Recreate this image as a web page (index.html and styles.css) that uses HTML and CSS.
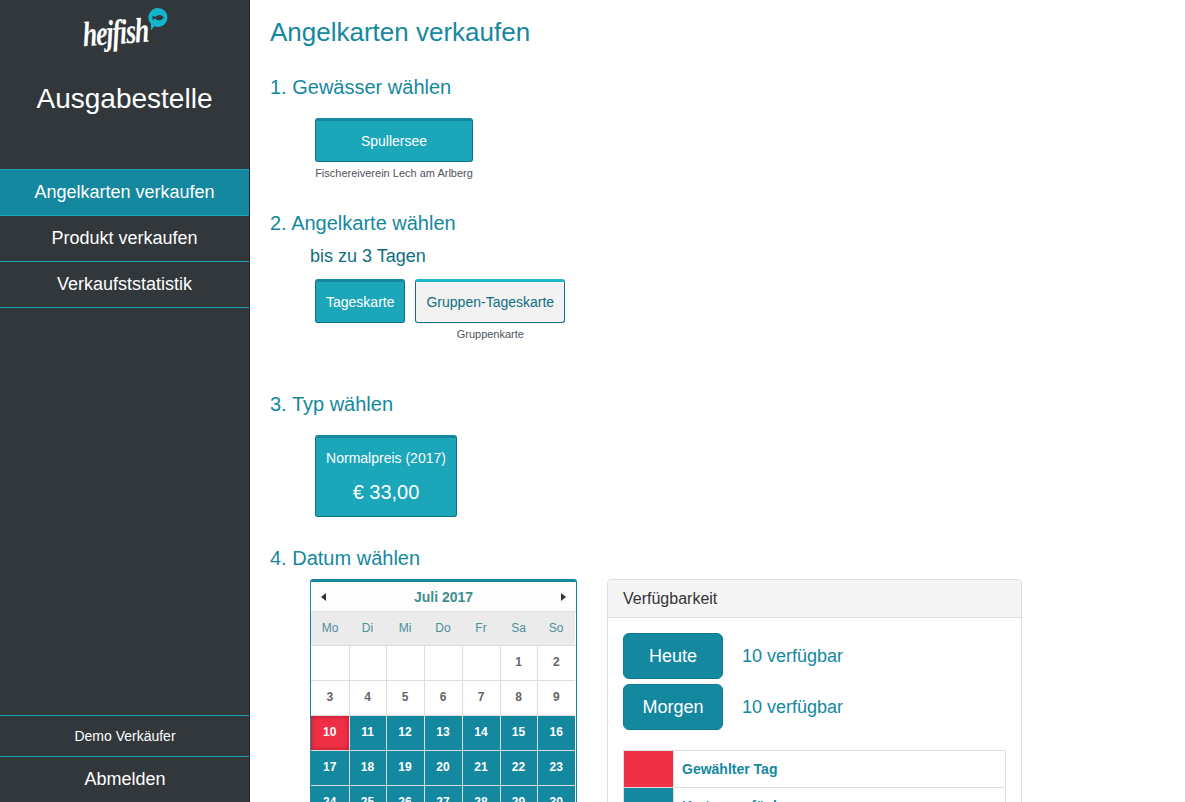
FILE: index.html
```html
<!DOCTYPE html>
<html lang="de">
<head>
    <meta charset="UTF-8">
    <title>Ausgabestelle</title>
    <link rel="stylesheet" href="styles.css">
</head>
<body>

    <aside class="sidebar">
        <div class="logo">
            <span class="logo-text">hejfish</span>
            <svg class="logo-bubble" width="20" height="23" viewBox="0 0 20 23">
                <path d="M10 0a9.500 9.500 0 0 1 0 19q-2 0-3.700-.7L3 22.500 2.900 15.800A9.500 9.500 0 0 1 10 0z" fill="#12b5cb"/>
                <path d="M16 9.500q-3-3.400-6.500-2.100-1.500.6-2.500 1.600L4.500 7.500V12L7 10.500q1 1 2.500 1.500 3.500 1 6.500-2.500z" fill="#30363b"/>
            </svg>
        </div>
        <div class="sidebar-title">Ausgabestelle</div>

        <nav class="side-nav">
            <a class="active" href="#">Angelkarten verkaufen</a>
            <a href="#">Produkt verkaufen</a>
            <a href="#">Verkaufststatistik</a>
        </nav>

        <div class="side-bottom">
            <div class="side-user">Demo Verkäufer</div>
            <a class="side-logout" href="#">Abmelden</a>
        </div>
    </aside>

    <main class="content">
        <h1>Angelkarten verkaufen</h1>

        <h2 class="step-first">1. Gewässer wählen</h2>
        <div class="choices choices-water">
            <div class="choice">
                <button class="pick pick-water">Spullersee</button>
                <small>Fischereiverein Lech am Arlberg</small>
            </div>
        </div>

        <h2 class="step-card">2. Angelkarte wählen</h2>
        <h3>bis zu 3 Tagen</h3>
        <div class="choices">
            <div class="choice">
                <button class="pick">Tageskarte</button>
            </div>
            <div class="choice">
                <button class="pick pick-light">Gruppen-Tageskarte</button>
                <small>Gruppenkarte</small>
            </div>
        </div>

        <h2 class="step-type">3. Typ wählen</h2>
        <div class="choices choices-type">
            <button class="pick pick-price">
                Normalpreis (2017)
                <span class="price">€ 33,00</span>
            </button>
        </div>

        <h2 class="step-date">4. Datum wählen</h2>
        <div class="date-row">
            <div class="calendar">
                <div class="cal-head">
                    <svg width="5" height="8" viewBox="0 0 5 8"><path d="M5 0v8L0 4z" fill="#333"/></svg>
                    <span>Juli 2017</span>
                    <svg width="5" height="8" viewBox="0 0 5 8"><path d="M0 0v8l5-4z" fill="#333"/></svg>
                </div>
                <table class="cal-table">
                    <thead>
                        <tr><th>Mo</th><th>Di</th><th>Mi</th><th>Do</th><th>Fr</th><th>Sa</th><th>So</th></tr>
                    </thead>
                    <tbody>
                        <tr><td></td><td></td><td></td><td></td><td></td><td>1</td><td>2</td></tr>
                        <tr><td>3</td><td>4</td><td>5</td><td>6</td><td>7</td><td>8</td><td>9</td></tr>
                        <tr class="free"><td class="selected">10</td><td>11</td><td>12</td><td>13</td><td>14</td><td>15</td><td>16</td></tr>
                        <tr class="free"><td>17</td><td>18</td><td>19</td><td>20</td><td>21</td><td>22</td><td>23</td></tr>
                        <tr class="free"><td>24</td><td>25</td><td>26</td><td>27</td><td>28</td><td>29</td><td>30</td></tr>
                    </tbody>
                </table>
            </div>

            <div class="panel">
                <div class="panel-head">Verfügbarkeit</div>
                <div class="panel-body">
                    <div class="avail">
                        <button class="day-btn">Heute</button>
                        <span>10 verfügbar</span>
                    </div>
                    <div class="avail">
                        <button class="day-btn">Morgen</button>
                        <span>10 verfügbar</span>
                    </div>
                    <table class="legend">
                        <tr><td class="swatch swatch-red"></td><td>Gewählter Tag</td></tr>
                        <tr><td class="swatch swatch-teal"></td><td>Karten verfügbar</td></tr>
                    </table>
                </div>
            </div>
        </div>
    </main>

</body>
</html>
```

FILE: styles.css
```css
* {
    box-sizing: border-box;
}

html, body {
    height: 100%;
}

body {
    font-family: 'Liberation Sans', Arial, sans-serif;
    margin: 0;
    display: flex;
    overflow: hidden;
    background-color: #fff;
    color: #333;
}

a {
    text-decoration: none;
}

button {
    font-family: inherit;
}

/* sidebar */
.sidebar {
    width: 250px;
    height: 100vh;
    flex: none;
    display: flex;
    flex-direction: column;
    background-color: #31373b;
    border-right: 1px solid #23272a;
    color: #fff;
}

.logo {
    position: relative;
    height: 62px;
    padding-top: 13px;
    text-align: center;
}

.logo-text {
    display: inline-block;
    margin-left: -19px;
    font-family: 'Liberation Serif', serif;
    font-size: 35px;
    line-height: 40px;
    font-weight: bold;
    font-style: italic;
    letter-spacing: -1.5px;
    color: #fff;
    transform: rotate(-4deg) scaleX(0.74);
}

.logo-bubble {
    position: absolute;
    left: 148px;
    top: 8px;
}

.sidebar-title {
    font-size: 28px;
    line-height: 40px;
    height: 107px;
    padding-top: 17px;
    text-align: center;
}

.side-nav {
    border-top: 1px solid #1ba6ba;
}

.side-nav a {
    display: block;
    height: 46px;
    line-height: 45px;
    font-size: 18px;
    text-align: center;
    color: #fff;
    border-bottom: 1px solid #1ba6ba;
}

.side-nav a.active {
    background-color: #14889f;
}

.side-bottom {
    margin-top: auto;
    border-top: 1px solid #1ba6ba;
}

.side-user {
    height: 41px;
    line-height: 40px;
    padding-left: 1px;
    font-size: 14px;
    text-align: center;
    border-bottom: 1px solid #1ba6ba;
}

.side-logout {
    display: block;
    height: 45px;
    line-height: 44px;
    padding-left: 1px;
    font-size: 18px;
    text-align: center;
    color: #fff;
}

/* main column */
.content {
    flex: 1;
    height: 100vh;
    overflow: hidden;
    padding: 17px 0 0 20px;
}

h1, h2, h3 {
    font-weight: normal;
    margin: 0;
}

h1 {
    font-size: 26px;
    line-height: 30px;
    color: #14889f;
}

h2 {
    font-size: 20px;
    line-height: 24px;
    color: #14889f;
}

h3 {
    font-size: 18px;
    line-height: 22px;
    margin: 10px 0 0 40px;
    color: #0f6e80;
}

.step-first {
    margin-top: 28px;
}

.step-card {
    margin-top: 31px;
}

.step-type {
    margin-top: 51px;
}

.step-date {
    margin-top: 29px;
}

.choices {
    display: flex;
    gap: 10px;
    margin: 12px 0 0 45px;
}

.choices-water {
    margin-top: 19px;
}

.choices-type {
    margin-top: 19px;
}

.choice {
    display: flex;
    flex-direction: column;
    align-items: center;
}

.choice small {
    display: block;
    font-size: 11px;
    line-height: 13px;
    margin-top: 5px;
    color: #4f535b;
    white-space: nowrap;
}

.pick {
    height: 44px;
    padding: 0 10px;
    font-size: 14px;
    color: #fff;
    background-color: #1ba6ba;
    border: 1px solid #0f6e80;
    border-top: 3px solid #14889f;
    border-radius: 3px;
}

.pick-water {
    width: 158px;
}

.pick-light {
    color: #0f6e80;
    background-color: #f2f2f2;
    border-top-color: #1fb5ca;
}

.pick-price {
    height: 82px;
    width: 142px;
    padding: 0 0 2px;
    line-height: 20px;
}

.price {
    display: block;
    margin-top: 12px;
    font-size: 20px;
    line-height: 24px;
}

/* calendar and availability */
.date-row {
    display: flex;
    align-items: flex-start;
    gap: 30px;
    margin: 9px 0 0 40px;
}

.calendar {
    width: 267px;
    flex: none;
    background-color: #fff;
    border: 1px solid #14889f;
    border-top-width: 3px;
    border-radius: 3px 3px 0 0;
}

.cal-head {
    display: flex;
    justify-content: space-between;
    align-items: center;
    height: 30px;
    padding: 0 10px;
    background-color: #fdfdfd;
    border-bottom: 1px solid #ddd;
    font-size: 14px;
    font-weight: bold;
    color: #3f8d8f;
}

.cal-table {
    width: 264px;
    border-collapse: collapse;
    table-layout: fixed;
}

.cal-table th {
    width: 38px;
    height: 33px;
    font-size: 12px;
    font-weight: normal;
    color: #4b8f9c;
    background-color: #ebebeb;
    border-bottom: 1px solid #ddd;
}

.cal-table th:nth-child(2),
.cal-table th:nth-child(6) {
    width: 37px;
}

.cal-table td {
    height: 35px;
    padding: 0 0 2px;
    font-size: 12px;
    font-weight: bold;
    text-align: center;
    color: #666;
    border: 1px solid #ddd;
}

.cal-table tr td:first-child {
    border-left: 0;
}

.cal-table tr td:last-child {
    border-right: 0;
}

.cal-table .free td {
    color: #fff;
    background-color: #14889f;
}

.cal-table .free td.selected {
    background-color: #ee2f46;
    box-shadow: inset 0 0 5px rgba(90, 0, 20, 0.45);
}

.panel {
    width: 415px;
    flex: none;
    background-color: #fff;
    border: 1px solid #ddd;
    border-radius: 4px;
}

.panel-head {
    height: 38px;
    line-height: 37px;
    padding: 0 15px;
    font-size: 16px;
    background-color: #f5f5f5;
    border-bottom: 1px solid #ddd;
    border-radius: 3px 3px 0 0;
}

.panel-body {
    padding: 15px;
}

.avail {
    display: flex;
    align-items: center;
    gap: 19px;
    margin-bottom: 5px;
    font-size: 18px;
    color: #14889f;
}

.day-btn {
    width: 100px;
    height: 46px;
    font-size: 18px;
    color: #fff;
    background-color: #14889f;
    border: 1px solid #117a8f;
    border-radius: 6px;
}

.legend {
    width: 383px;
    margin-top: 20px;
    border-collapse: collapse;
}

.legend td {
    height: 37px;
    padding: 0 8px;
    font-size: 14px;
    font-weight: bold;
    color: #14889f;
    border: 1px solid #ddd;
}

.legend .swatch {
    width: 50px;
}

.swatch-red {
    background-color: #ee2f46;
}

.swatch-teal {
    background-color: #14889f;
}
```
